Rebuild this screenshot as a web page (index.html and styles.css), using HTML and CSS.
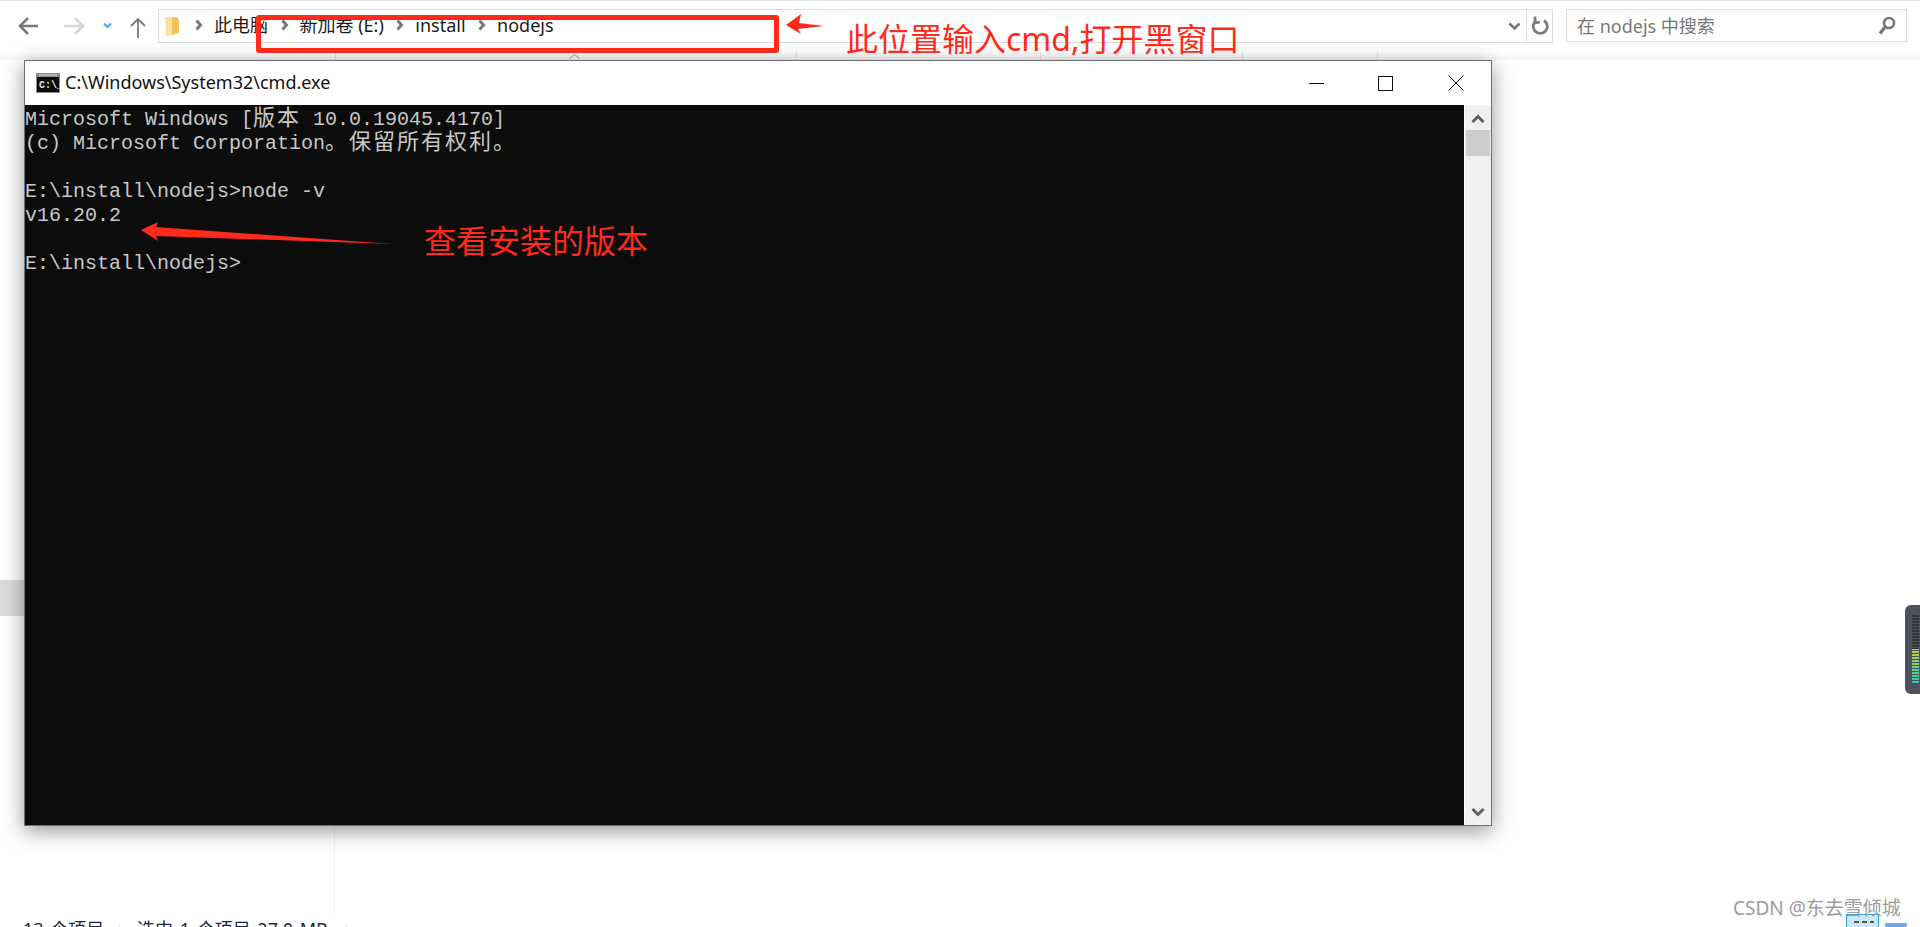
FILE: index.html
```html
<!DOCTYPE html>
<html lang="zh-CN">
<head>
<meta charset="utf-8">
<title>cmd</title>
<link rel="stylesheet" href="styles.css">
</head>
<body>
<div class="explorer">
  <div class="toolbar">
    <svg class="nav" width="150" height="33" viewBox="0 0 150 33">
      <g fill="none" stroke-width="2.6">
        <path d="M12 9 L4 17 L12 25 M4 17 H22" stroke="#7a7a7a"/>
        <path d="M59 9 L67 17 L59 25 M67 17 H48" stroke="#d6d6d6"/>
        <path d="M88 14.5 L91.5 18 L95 14.5" stroke="#4ea6ee" stroke-width="2"/>
        <path d="M115 17 L122 10 L129 17 M122 10 V29" stroke="#7a7a7a" stroke-width="1.8"/>
      </g>
    </svg>
    <div class="address">
      <svg class="folder" width="15" height="21" viewBox="0 0 15 21">
        <path d="M0 1 H7 L9 3 V19 L1 20 Z" fill="#f8e3a2"/>
        <path d="M7 1 H12 L14 4 V17 L7 19 Z" fill="#f2c35c"/>
      </svg>
      <span class="crumb"><svg class="sep" width="8" height="12" viewBox="0 0 8 12"><path d="M1.500 1.500 L5.500 6 L1.500 10.500" fill="none" stroke="#777" stroke-width="3"/></svg>此电脑</span>
      <span class="crumb"><svg class="sep" width="8" height="12" viewBox="0 0 8 12"><path d="M1.500 1.500 L5.500 6 L1.500 10.500" fill="none" stroke="#777" stroke-width="3"/></svg>新加卷 (E:)</span>
      <span class="crumb"><svg class="sep" width="8" height="12" viewBox="0 0 8 12"><path d="M1.500 1.500 L5.500 6 L1.500 10.500" fill="none" stroke="#777" stroke-width="3"/></svg>install</span>
      <span class="crumb"><svg class="sep" width="8" height="12" viewBox="0 0 8 12"><path d="M1.500 1.500 L5.500 6 L1.500 10.500" fill="none" stroke="#777" stroke-width="3"/></svg>nodejs</span>
      <div class="address-end">
        <svg class="drop" width="13" height="9" viewBox="0 0 13 9"><path d="M1.500 1.500 L6.500 6.500 L11.500 1.500" fill="none" stroke="#777" stroke-width="2.600"/></svg>
        <div class="refresh">
          <svg width="18" height="20" viewBox="0 0 18 20"><path d="M5.500 4.500 A7 7 0 1 0 13 4.500 M4 0.500 L4 7 L9 6" fill="none" stroke="#7c7c7c" stroke-width="2.800"/></svg>
        </div>
      </div>
    </div>
    <div class="search">
      <span>在 nodejs 中搜索</span>
      <svg width="18" height="20" viewBox="0 0 18 20"><circle cx="11" cy="7" r="5" fill="none" stroke="#777" stroke-width="2.600"/><path d="M7 11 L2 17.500" stroke="#777" stroke-width="3.200"/></svg>
    </div>
  </div>
  <div class="columns">
    <span class="col col-a"></span><span class="col col-b"></span><span class="col col-c"></span><span class="col col-d"></span><span class="col col-e"></span>
    <svg class="sort-caret" width="11" height="5" viewBox="0 0 11 5"><path d="M0.500 4.500 L5.500 0.500 L10.500 4.500" fill="none" stroke="#999"/></svg>
  </div>
  <div class="content">
    <div class="sidebar"><div class="selected"></div></div>
    <div class="files"></div>
  </div>
  <div class="status">
    <span class="count">13 个项目</span>
    <span class="divider"></span>
    <span class="picked">选中 1 个项目 27.0 MB</span>
    <span class="divider"></span>
    <span class="views">
      <span class="view-list"><i></i></span>
      <span class="view-icons"></span>
    </span>
  </div>
</div>

<section class="cmd">
  <header class="cmd-title">
    <svg class="cmd-icon" width="24" height="20" viewBox="0 0 24 20">
      <rect width="24" height="20" fill="#8a8a8a"/>
      <rect x="1" y="4" width="22" height="15" fill="#0c0c0c"/>
      <rect x="3" y="1.500" width="18" height="1" fill="#d8d8d8"/>
      <text x="3" y="15" class="cmd-icon-text">C:\_</text>
    </svg>
    <span class="cmd-name">C:\Windows\System32\cmd.exe</span>
    <div class="cmd-controls">
      <svg width="15" height="15" viewBox="0 0 15 15"><path d="M0 7.500 H15" stroke="#111" stroke-width="1"/></svg>
      <svg width="15" height="15" viewBox="0 0 15 15"><rect x="0.500" y="0.500" width="14" height="14" fill="none" stroke="#111"/></svg>
      <svg class="cmd-close" width="16" height="16" viewBox="0 0 16 16"><path d="M0.500 0.500 L15.500 15.500 M15.500 0.500 L0.500 15.500" stroke="#111" stroke-width="1"/></svg>
    </div>
  </header>
  <div class="cmd-body">
    <div class="terminal">
      <div class="line">Microsoft Windows [<b>版本</b> 10.0.19045.4170]</div>
      <div class="line">(c) Microsoft Corporation<b>。保留所有权利。</b></div>
      <div class="line"></div>
      <div class="line">E:\install\nodejs&gt;node -v</div>
      <div class="line">v16.20.2</div>
      <div class="line"></div>
      <div class="line">E:\install\nodejs&gt;</div>
    </div>
    <div class="scrollbar">
      <svg width="14" height="10" viewBox="0 0 14 10"><path d="M1.500 8 L7 2.500 L12.500 8" fill="none" stroke="#606060" stroke-width="3"/></svg>
      <div class="thumb"></div>
      <svg class="scroll-down" width="14" height="10" viewBox="0 0 14 10"><path d="M1.500 2 L7 7.500 L12.500 2" fill="none" stroke="#606060" stroke-width="3"/></svg>
    </div>
  </div>
</section>

<div class="box-mark"></div>
<svg class="arrows" width="1920" height="927" viewBox="0 0 1920 927">
  <path d="M786 25 L801 14 L799 23 L824 26 L798 29 L801 34 Z" fill="#ff2a1a"/>
  <path d="M141 230 L158 222 L156 227 L392 244 L156 236 L158 241 Z" fill="#ff2a1a"/>
</svg>
<p class="note note-cmd">此位置输入cmd,打开黑窗口</p>
<p class="note note-version">查看安装的版本</p>

<aside class="meter-widget"><div class="meter"></div></aside>
<p class="watermark">CSDN @东去雪倾城</p>
</body>
</html>
```
FILE: styles.css
```css
* { box-sizing: border-box; }
html, body { margin: 0; height: 927px; overflow: hidden; background: #fff; }
body { position: relative; font-family: "Noto Sans", "Noto Sans CJK SC", sans-serif; color: #1a1a1a; }

.explorer { height: 927px; display: flex; flex-direction: column; border-top: 1px solid #e2e2e2; }

.toolbar { display: flex; height: 51px; padding: 8px 13px 0 16px; align-items: flex-start; }
.nav { flex: none; margin-right: -8px; width: 150px; }
.address { flex: none; width: 1395px; height: 34px; border: 1px solid #dcdcdc; display: flex; align-items: center; font-size: 18px; line-height: 24px; padding-left: 6px; }
.folder { flex: none; margin-right: 15px; }
.crumb { display: inline-flex; align-items: center; gap: 11px; margin-right: 12.500px; white-space: nowrap; position: relative; top: -1px; }
.address-end { margin-left: auto; display: flex; align-items: center; height: 100%; }
.drop { margin-right: 5px; }
.refresh { width: 26px; height: 100%; border-left: 1px solid #dcdcdc; display: flex; align-items: center; justify-content: center; }
.search { flex: none; width: 341px; height: 33px; margin-left: 13px; border: 1px solid #dcdcdc; display: flex; align-items: center; justify-content: space-between; padding: 0 10px; font-size: 18px; color: #777; }
.search span { position: relative; top: -1px; }

.columns { height: 8px; position: relative; background: linear-gradient(#fff, #f6f6f6); flex: none; }
.col { position: absolute; top: 0; bottom: 0; width: 1px; background: #e2e2e2; }
.col-a { left: 335px; } .col-b { left: 796px; } .col-c { left: 1040px; } .col-d { left: 1242px; } .col-e { left: 1377px; }
.sort-caret { position: absolute; left: 569px; top: 2px; }

.content { flex: 1; display: flex; min-height: 0; }
.sidebar { width: 335px; border-right: 1px solid #f1f1f1; padding-top: 520px; }
.selected { height: 36px; background: #dcdcdc; }
.files { flex: 1; }

.status { height: 14px; flex: none; display: flex; align-items: flex-start; overflow: hidden; font-size: 18px; line-height: 20px; word-spacing: 2px; color: #1d2a44; padding-left: 23px; position: relative; }
.count { width: 96px; padding-top: 6px; white-space: nowrap; }
.divider { width: 1px; height: 14px; margin-top: 10px; background: #e6e6e6; }
.picked { width: 226px; padding: 6px 0 0 17px; white-space: nowrap; }
.views { margin-left: auto; display: flex; gap: 6px; align-items: flex-start; padding-right: 13px; }
.view-list { width: 33px; height: 14px; margin-top: 1px; border: 1px solid #26a0da; background: #cbe8f6; display: block; position: relative; }
.view-list i { position: absolute; left: 7px; top: 6px; width: 20px; height: 2px; background: repeating-linear-gradient(90deg, #555 0 5px, transparent 5px 8px); }
.view-icons { width: 22px; height: 6px; margin-top: 10px; border: 1px solid #a9a9a9; background: #6aa5f0; }

.cmd { position: absolute; left: 24px; top: 60px; width: 1468px; height: 766px; background: #fff; border: 1px solid #707070; box-shadow: 0 5px 20px rgba(0,0,0,.42); display: flex; flex-direction: column; }
.cmd-title { height: 44px; flex: none; display: flex; align-items: center; padding-left: 11px; font-size: 18px; color: #111; }
.cmd-icon { flex: none; margin-right: 5px; }
.cmd-icon-text { font: bold 10px "Liberation Mono", monospace; fill: #e8e8e8; }
.cmd-name { white-space: nowrap; position: relative; top: -1px; }
.cmd-controls { margin-left: auto; display: flex; align-items: center; gap: 54px; padding-right: 27px; }
.cmd-controls svg { display: block; }
.cmd-close { margin-left: 1px; }

.cmd-body { flex: 1; display: flex; min-height: 0; }
.terminal { flex: 1; padding-top: 3px; background: #0c0c0c; color: #c8c8c8; font: 20px/24px "Liberation Mono", "Noto Sans CJK SC", monospace; }
.line { height: 24px; white-space: pre; }
.terminal b { font-weight: 400; font-family: "Noto Sans CJK SC", sans-serif; font-size: 22px; letter-spacing: 2px; line-height: 0; }
.scrollbar { width: 26px; margin-left: 1px; background: #f0f0f0; display: flex; flex-direction: column; align-items: center; padding-top: 9px; }
.thumb { width: 24px; height: 26px; background: #cdcdcd; margin-top: 6px; flex: none; }
.scroll-down { margin-top: auto; margin-bottom: 8px; }

.box-mark { position: absolute; left: 256px; top: 15px; width: 523px; height: 38px; border: 5px solid #ff2a1a; border-radius: 3px; }
.arrows { position: absolute; left: 0; top: 0; pointer-events: none; }
.note { position: absolute; margin: 0; color: #ff2a1a; white-space: nowrap; line-height: 40px; font-weight: 400; }
.note-cmd { left: 846px; top: 19px; font-size: 32px; }
.note-version { left: 424px; top: 221px; font-size: 32px; }

.meter-widget { position: absolute; right: 0; top: 605px; width: 15px; height: 89px; background: #4e5161; border-radius: 6px 0 0 6px; padding: 10px 1px 0 7px; }
.meter { height: 69px; background: repeating-linear-gradient(transparent 0 2px, #4e5161 2px 3px), linear-gradient(#33343c 0 50%, #c9c94a 50%, #6fcf82 75%, #2fc0b0 100%); }

.watermark { position: absolute; left: 1733px; top: 895px; margin: 0; font-size: 19px; line-height: 26px; color: #9c9c9c; white-space: nowrap; }
```
